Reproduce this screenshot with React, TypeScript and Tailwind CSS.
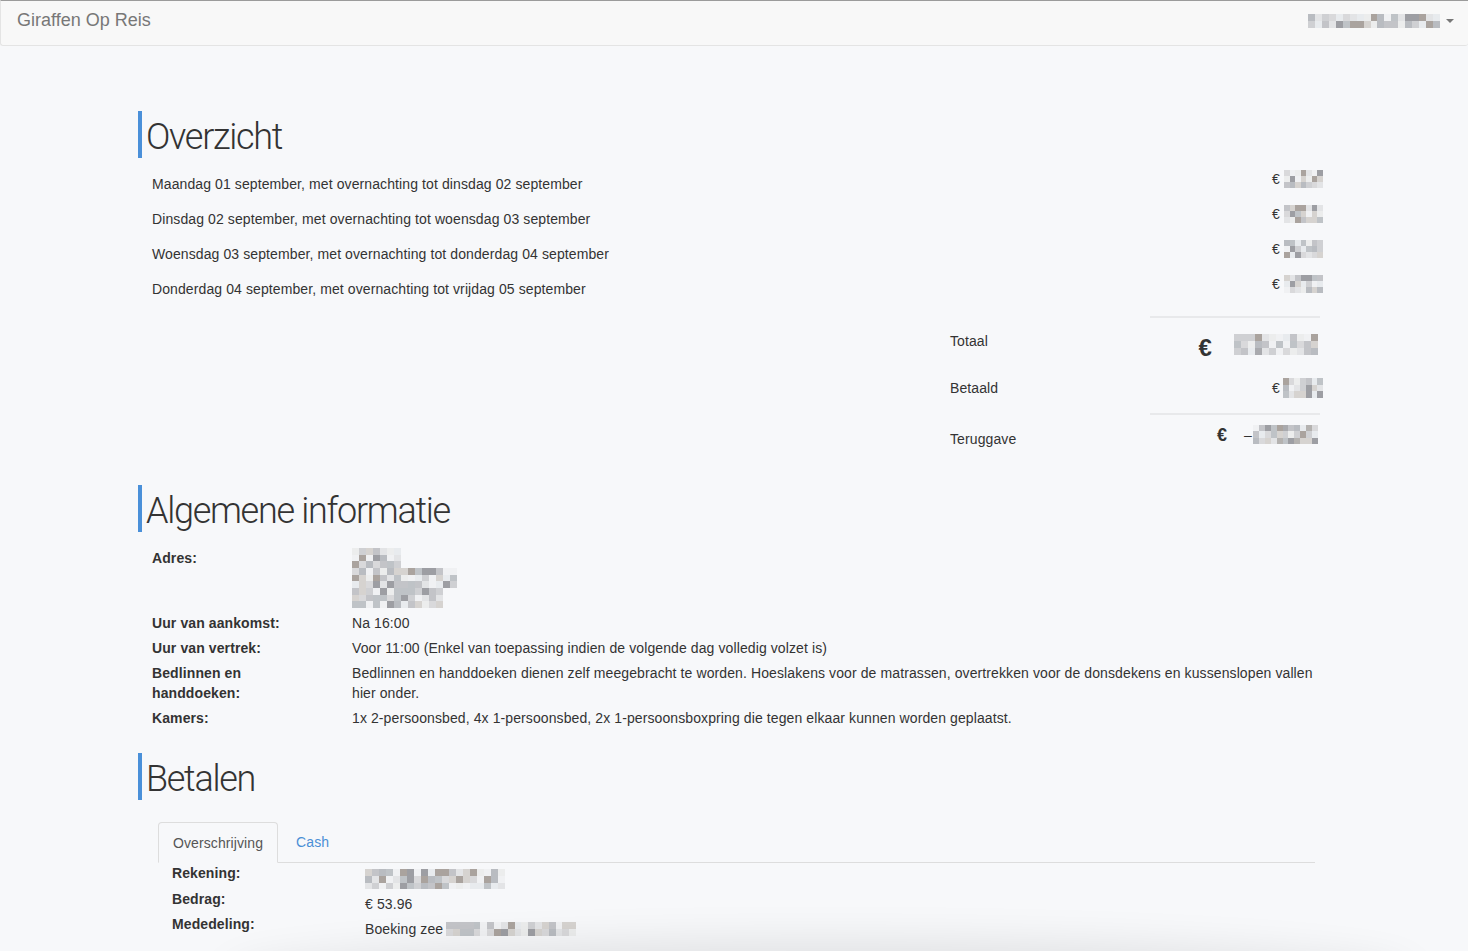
import React from "react";

function rng(seed: number) {
  let s = seed * 9301 + 49297;
  return () => {
    s = (s * 9301 + 49297) % 233280;
    return s / 233280;
  };
}

const PALETTE = [
  "#a9aaae", "#b4b2b0", "#c3c4c8", "#cfd0d3", "#d9d9db", "#e3e4e6", "#eceded",
  "#9d9ea3", "#bfc3c7", "#aaa39e", "#d6d3d0", "#e8ebee", "#b9bcc1", "#f0f1f3",
];

function Pixels({ w, h, block = 6, seed = 1, light = false }: { w: number; h: number; block?: number; seed?: number; light?: boolean }) {
  const cols = Math.max(1, Math.round(w / block));
  const rows = Math.max(1, Math.round(h / block));
  const r = rng(seed);
  const cells: string[] = [];
  for (let i = 0; i < cols * rows; i++) {
    const v = r();
    const idx = light ? Math.floor(2 + v * (PALETTE.length - 2)) : Math.floor(v * PALETTE.length);
    cells.push(PALETTE[Math.min(idx, PALETTE.length - 1)]);
  }
  return (
    <span
      className="inline-grid align-middle"
      style={{ width: w, height: h, gridTemplateColumns: `repeat(${cols}, 1fr)`, gridTemplateRows: `repeat(${rows}, 1fr)` }}
    >
      {cells.map((c, i) => (
        <span key={i} style={{ background: c }} />
      ))}
    </span>
  );
}

function SectionHeading({ children }: { children: React.ReactNode }) {
  return (
    <div className="flex h-[47px] items-center border-l-4 border-[#4a90d9] pl-[4px]">
      <h1 className="pt-[5px] font-['Roboto',sans-serif] text-[36px] font-light leading-[47px] tracking-[-1.3px] text-[#333]">
        {children}
      </h1>
    </div>
  );
}

const nights = [
  "Maandag 01 september, met overnachting tot dinsdag 02 september",
  "Dinsdag 02 september, met overnachting tot woensdag 03 september",
  "Woensdag 03 september, met overnachting tot donderdag 04 september",
  "Donderdag 04 september, met overnachting tot vrijdag 05 september",
];

export default function App() {
  return (
    <div className="min-h-screen bg-[#f7f8fa] font-['Liberation_Sans',Arial,sans-serif] text-[14px] leading-[20px] tracking-[0.1px] text-[#333]">
      <nav className="flex h-[46px] items-center justify-between rounded-b-[3px] border-t border-b border-l border-t-[#9b9b9b] border-b-[#e4e4e4] border-l-[#e4e4e4] bg-[#f8f8f8] pl-[16px] pr-[14px]">
        <span className="text-[18px] leading-[20px] tracking-normal text-[#777] -mt-[7px]">Giraffen Op Reis</span>
        <div className="flex items-center gap-[6px] -mt-[4px]">
          <Pixels w={132} h={14} block={7} seed={11} light />
          <span className="h-0 w-0 border-x-[4px] border-t-[4px] border-x-transparent border-t-[#777]" />
        </div>
      </nav>

      <main className="ml-[138px] w-[1185px] pt-[65px] pb-[40px]">
        <SectionHeading>Overzicht</SectionHeading>
        <div className="mt-[8px]">
          {nights.map((n, i) => (
            <div key={i} className="flex h-[35px] items-center justify-between pl-[14px]">
              <span>{n}</span>
              <span className="mb-[10px] flex items-center gap-[4px]">
                <span>€</span>
                <Pixels w={39} h={18} block={6} seed={i + 3} light />
              </span>
            </div>
          ))}
        </div>

        <div className="mt-[10px] ml-[1012px] h-[2px] w-[170px] bg-[#e8e9eb]" />
        <div className="ml-[812px] flex h-[47px]">
          <div className="w-[200px] pt-[13px]">Totaal</div>
          <div className="flex w-[168px] justify-end pt-[16px]">
            <span className="text-[24px] font-bold leading-[24px] mr-[22px] mt-[2px]">€</span>
            <Pixels w={84} h={21} block={7} seed={21} />
          </div>
        </div>
        <div className="ml-[812px] flex h-[48px]">
          <div className="w-[200px] pt-[13px]">Betaald</div>
          <div className="flex w-[173px] items-start justify-end gap-[3px] pt-[13px]">
            <span className="leading-[20px]">€</span>
            <Pixels w={40} h={20} block={6} seed={31} light />
          </div>
        </div>
        <div className="ml-[1012px] h-[2px] w-[170px] bg-[#e8e9eb]" />
        <div className="ml-[812px] flex h-[46px]">
          <div className="w-[200px] pt-[14px]">Teruggave</div>
          <div className="flex w-[168px] items-start justify-end pt-[10px]">
            <span className="text-[18px] font-bold leading-[20px] mr-[17px]">€</span>
            <span className="mr-[1px] leading-[20px]">–</span>
            <Pixels w={65} h={19} block={6} seed={41} />
          </div>
        </div>

        <div className="mt-[24px]">
          <SectionHeading>Algemene informatie</SectionHeading>
        </div>
        <div className="mt-[16px] pl-[14px] flex flex-col gap-[5px]">
          <div className="flex">
            <div className="w-[200px] shrink-0 font-bold">Adres:</div>
            <div className="flex flex-col">
              <Pixels w={49} h={20} block={7} seed={51} light />
              <Pixels w={105} h={20} block={7} seed={52} light />
              <Pixels w={91} h={20} block={7} seed={53} light />
            </div>
          </div>
          <div className="flex">
            <div className="w-[200px] shrink-0 font-bold">Uur van aankomst:</div>
            <div>Na 16:00</div>
          </div>
          <div className="flex">
            <div className="w-[200px] shrink-0 font-bold">Uur van vertrek:</div>
            <div>Voor 11:00 (Enkel van toepassing indien de volgende dag volledig volzet is)</div>
          </div>
          <div className="flex">
            <div className="w-[200px] shrink-0 font-bold">
              Bedlinnen en
              <br />
              handdoeken:
            </div>
            <div className="w-[975px]">
              Bedlinnen en handdoeken dienen zelf meegebracht te worden. Hoeslakens voor de matrassen, overtrekken voor de donsdekens en kussenslopen vallen hier onder.
            </div>
          </div>
          <div className="flex">
            <div className="w-[200px] shrink-0 font-bold">Kamers:</div>
            <div>1x 2-persoonsbed, 4x 1-persoonsbed, 2x 1-persoonsboxpring die tegen elkaar kunnen worden geplaatst.</div>
          </div>
        </div>

        <div className="mt-[25px]">
          <SectionHeading>Betalen</SectionHeading>
        </div>
        <div className="mt-[22px] ml-[20px] mr-[8px]">
          <div className="flex border-b border-[#ddd]">
            <div className="-mb-px h-[41px] rounded-t-[4px] border border-[#ddd] border-b-transparent bg-[#f7f8fa] px-[14px] pt-[10px] text-[#555]">
              Overschrijving
            </div>
            <div className="ml-[2px] h-[40px] px-[16px] pt-[10px] text-[#4a8fd6]">Cash</div>
          </div>
          <div className="pl-[14px] flex flex-col">
            <div className="flex">
              <div className="w-[193px] shrink-0 font-bold">Rekening:</div>
              <div className="pt-[5px]">
                <Pixels w={140} h={20} block={7} seed={61} light />
              </div>
            </div>
            <div className="flex">
              <div className="w-[193px] shrink-0 font-bold">Bedrag:</div>
              <div className="pt-[5px]">€ 53.96</div>
            </div>
            <div className="flex">
              <div className="w-[193px] shrink-0 font-bold">Mededeling:</div>
              <div className="flex items-center gap-[3px] pt-[5px]">
                <span>Boeking zee</span>
                <Pixels w={130} h={14} block={7} seed={71} light />
              </div>
            </div>
          </div>
        </div>
      </main>

      <div className="pointer-events-none fixed left-[240px] top-[958px] h-[40px] w-[1160px] rounded-[50%] shadow-[0_0_40px_18px_rgba(0,0,0,0.09)]" />
    </div>
  );
}
